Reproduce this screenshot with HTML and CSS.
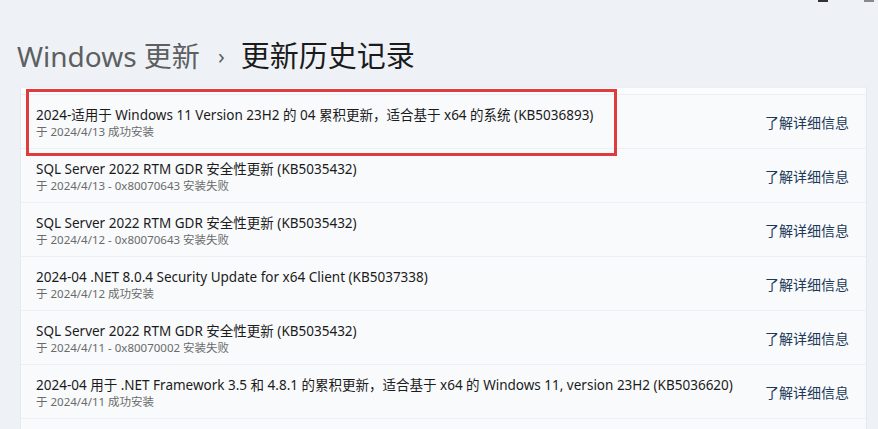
FILE: index.html
```html
<!DOCTYPE html>
<html lang="zh-CN">
<head>
<meta charset="utf-8">
<title>更新历史记录</title>
<link rel="stylesheet" href="styles.css">
</head>
<body>
<div class="winctl"><span class="ctl ctl-a"></span><span class="ctl ctl-b"></span></div>
<header class="crumbs">
  <span class="crumb-parent">Windows 更新</span>
  <span class="chev">›</span>
  <span class="crumb-current">更新历史记录</span>
</header>
<main class="card">
  <div class="topstrip"></div>
  <div class="row">
    <div class="info">
      <div class="name">2024-适用于 Windows 11 Version 23H2 的 04 累积更新，适合基于 x64 的系统 (KB5036893)</div>
      <div class="status">于 2024/4/13 成功安装</div>
    </div>
    <a class="more">了解详细信息</a>
  </div>
  <div class="row">
    <div class="info">
      <div class="name">SQL Server 2022 RTM GDR 安全性更新 (KB5035432)</div>
      <div class="status">于 2024/4/13 - 0x80070643 安装失败</div>
    </div>
    <a class="more">了解详细信息</a>
  </div>
  <div class="row">
    <div class="info">
      <div class="name">SQL Server 2022 RTM GDR 安全性更新 (KB5035432)</div>
      <div class="status">于 2024/4/12 - 0x80070643 安装失败</div>
    </div>
    <a class="more">了解详细信息</a>
  </div>
  <div class="row">
    <div class="info">
      <div class="name">2024-04 .NET 8.0.4 Security Update for x64 Client (KB5037338)</div>
      <div class="status">于 2024/4/12 成功安装</div>
    </div>
    <a class="more">了解详细信息</a>
  </div>
  <div class="row">
    <div class="info">
      <div class="name">SQL Server 2022 RTM GDR 安全性更新 (KB5035432)</div>
      <div class="status">于 2024/4/11 - 0x80070002 安装失败</div>
    </div>
    <a class="more">了解详细信息</a>
  </div>
  <div class="row">
    <div class="info">
      <div class="name">2024-04 用于 .NET Framework 3.5 和 4.8.1 的累积更新，适合基于 x64 的 Windows 11, version 23H2 (KB5036620)</div>
      <div class="status">于 2024/4/11 成功安装</div>
    </div>
    <a class="more">了解详细信息</a>
  </div>
</main>
<div class="highlight"></div>
</body>
</html>
```
FILE: styles.css
```css
* { box-sizing: border-box; }
html, body { margin: 0; padding: 0; }
body {
  width: 878px;
  height: 429px;
  overflow: hidden;
  background: #eef2f7;
  font-family: "Segoe UI", "Noto Sans", "Noto Sans CJK SC", sans-serif;
  position: relative;
}
.winctl { position: absolute; top: 0; right: 0; width: 100px; height: 4px; }
.ctl { position: absolute; top: 0; height: 2px; background: #333; }
.ctl-a { left: 40px; width: 10px; }
.ctl-b { left: 86px; width: 10px; background: #888; }
.crumbs {
  display: flex;
  align-items: baseline;
  padding: 36px 0 0 17px;
  height: 87px;
  font-size: 28px;
  line-height: 40px;
  font-family: "Segoe UI", "Noto Sans", "Noto Sans CJK SC", sans-serif;
}
.crumb-parent { color: #5d5f61; }
.chev { color: #5d5f61; font-size: 22px; margin: 0 16px 0 18px; position: relative; top: -3px; }
.crumb-current { color: #1b1b1b; font-size: 29px; }
.card {
  margin-left: 20px;
  width: 847px;
  height: 342px;
  background: #f9fafc;
  border-left: 1px solid #e6e9ee;
  border-right: 1px solid #e6e9ee;
}
.topstrip { height: 8px; border-top: 1px solid #eceff3; border-bottom: 1px solid #eceff3; background: #fbfcfd; }
.row {
  height: 54px;
  display: flex;
  align-items: center;
  justify-content: space-between;
  padding: 0 17px 0 15px;
  border-bottom: 1px solid #eceff3;
}
.info { display: flex; flex-direction: column; margin-top: 2px; }
.name { font-size: 13.5px; line-height: 17px; color: #1b1b1b; white-space: nowrap; }
.status { font-size: 11.5px; line-height: 15px; color: #6a6a6a; white-space: nowrap; }
.more { font-size: 14px; color: #1c3957; white-space: nowrap; }
.highlight {
  position: absolute;
  left: 26px;
  top: 89px;
  width: 591px;
  height: 67px;
  border: 3px solid #e03c3e;
}
```
